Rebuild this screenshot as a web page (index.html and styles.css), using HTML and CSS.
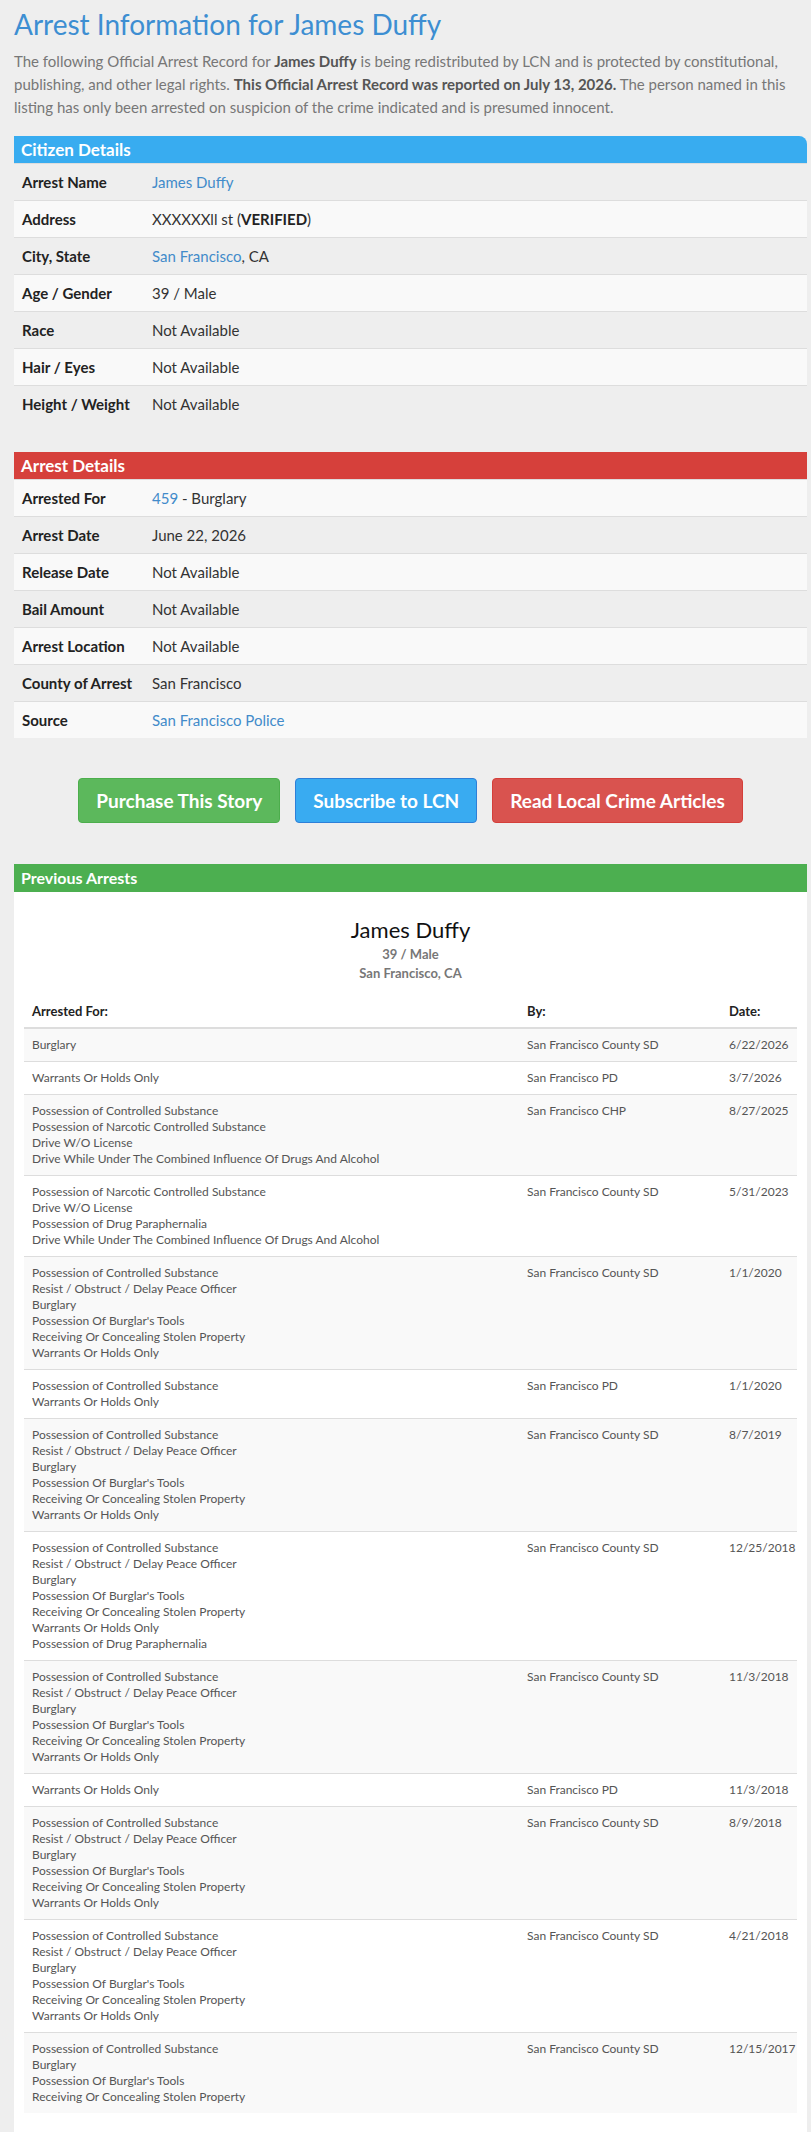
FILE: index.html
```html
<!DOCTYPE html>
<html lang="en">
<head>
    <meta charset="UTF-8">
    <meta name="viewport" content="width=device-width, initial-scale=1.0">
    <title>Arrest Information for James Duffy</title>
    <link rel="stylesheet" href="styles.css">
</head>
<body>

<div class="page">
    <h1 class="page-title">Arrest Information for James Duffy</h1>
    <p class="intro">The following Official Arrest Record for <b>James Duffy</b> is being redistributed by LCN and is protected by constitutional, publishing, and other legal rights. <b>This Official Arrest Record was reported on July 13, 2026.</b> The person named in this listing has only been arrested on suspicion of the crime indicated and is presumed innocent.</p>

    <div class="panel-head head-blue">Citizen Details</div>
    <table class="details">
        <tr><td class="label">Arrest Name</td><td><a href="#">James Duffy</a></td></tr>
        <tr><td class="label">Address</td><td>XXXXXXll st (<b>VERIFIED</b>)</td></tr>
        <tr><td class="label">City, State</td><td><a href="#">San Francisco</a>, CA</td></tr>
        <tr><td class="label">Age / Gender</td><td>39 / Male</td></tr>
        <tr><td class="label">Race</td><td>Not Available</td></tr>
        <tr><td class="label">Hair / Eyes</td><td>Not Available</td></tr>
        <tr><td class="label">Height / Weight</td><td>Not Available</td></tr>
    </table>

    <div class="panel-head head-red">Arrest Details</div>
    <table class="details details-arrest">
        <tr><td class="label">Arrested For</td><td><a href="#">459</a> - Burglary</td></tr>
        <tr><td class="label">Arrest Date</td><td>June 22, 2026</td></tr>
        <tr><td class="label">Release Date</td><td>Not Available</td></tr>
        <tr><td class="label">Bail Amount</td><td>Not Available</td></tr>
        <tr><td class="label">Arrest Location</td><td>Not Available</td></tr>
        <tr><td class="label">County of Arrest</td><td>San Francisco</td></tr>
        <tr><td class="label">Source</td><td><a href="#">San Francisco Police</a></td></tr>
    </table>

    <div class="actions">
        <a href="#" class="btn btn-green">Purchase This Story</a>
        <a href="#" class="btn btn-blue">Subscribe to LCN</a>
        <a href="#" class="btn btn-red">Read Local Crime Articles</a>
    </div>

    <div class="panel-head head-green">Previous Arrests</div>
    <div class="prev-panel">
        <h2 class="prev-name">James Duffy</h2>
        <div class="prev-meta">39 / Male</div>
        <div class="prev-meta">San Francisco, CA</div>

        <table class="history">
            <thead>
                <tr><th class="col-charge">Arrested For:</th><th class="col-by">By:</th><th class="col-date">Date:</th></tr>
            </thead>
            <tbody>
                <tr>
                    <td>Burglary</td>
                    <td>San Francisco County SD</td>
                    <td>6/22/2026</td>
                </tr>
                <tr>
                    <td>Warrants Or Holds Only</td>
                    <td>San Francisco PD</td>
                    <td>3/7/2026</td>
                </tr>
                <tr>
                    <td>Possession of Controlled Substance<br>Possession of Narcotic Controlled Substance<br>Drive W/O License<br>Drive While Under The Combined Influence Of Drugs And Alcohol</td>
                    <td>San Francisco CHP</td>
                    <td>8/27/2025</td>
                </tr>
                <tr>
                    <td>Possession of Narcotic Controlled Substance<br>Drive W/O License<br>Possession of Drug Paraphernalia<br>Drive While Under The Combined Influence Of Drugs And Alcohol</td>
                    <td>San Francisco County SD</td>
                    <td>5/31/2023</td>
                </tr>
                <tr>
                    <td>Possession of Controlled Substance<br>Resist / Obstruct / Delay Peace Officer<br>Burglary<br>Possession Of Burglar's Tools<br>Receiving Or Concealing Stolen Property<br>Warrants Or Holds Only</td>
                    <td>San Francisco County SD</td>
                    <td>1/1/2020</td>
                </tr>
                <tr>
                    <td>Possession of Controlled Substance<br>Warrants Or Holds Only</td>
                    <td>San Francisco PD</td>
                    <td>1/1/2020</td>
                </tr>
                <tr>
                    <td>Possession of Controlled Substance<br>Resist / Obstruct / Delay Peace Officer<br>Burglary<br>Possession Of Burglar's Tools<br>Receiving Or Concealing Stolen Property<br>Warrants Or Holds Only</td>
                    <td>San Francisco County SD</td>
                    <td>8/7/2019</td>
                </tr>
                <tr>
                    <td>Possession of Controlled Substance<br>Resist / Obstruct / Delay Peace Officer<br>Burglary<br>Possession Of Burglar's Tools<br>Receiving Or Concealing Stolen Property<br>Warrants Or Holds Only<br>Possession of Drug Paraphernalia</td>
                    <td>San Francisco County SD</td>
                    <td>12/25/2018</td>
                </tr>
                <tr>
                    <td>Possession of Controlled Substance<br>Resist / Obstruct / Delay Peace Officer<br>Burglary<br>Possession Of Burglar's Tools<br>Receiving Or Concealing Stolen Property<br>Warrants Or Holds Only</td>
                    <td>San Francisco County SD</td>
                    <td>11/3/2018</td>
                </tr>
                <tr>
                    <td>Warrants Or Holds Only</td>
                    <td>San Francisco PD</td>
                    <td>11/3/2018</td>
                </tr>
                <tr>
                    <td>Possession of Controlled Substance<br>Resist / Obstruct / Delay Peace Officer<br>Burglary<br>Possession Of Burglar's Tools<br>Receiving Or Concealing Stolen Property<br>Warrants Or Holds Only</td>
                    <td>San Francisco County SD</td>
                    <td>8/9/2018</td>
                </tr>
                <tr>
                    <td>Possession of Controlled Substance<br>Resist / Obstruct / Delay Peace Officer<br>Burglary<br>Possession Of Burglar's Tools<br>Receiving Or Concealing Stolen Property<br>Warrants Or Holds Only</td>
                    <td>San Francisco County SD</td>
                    <td>4/21/2018</td>
                </tr>
                <tr>
                    <td>Possession of Controlled Substance<br>Burglary<br>Possession Of Burglar's Tools<br>Receiving Or Concealing Stolen Property</td>
                    <td>San Francisco County SD</td>
                    <td>12/15/2017</td>
                </tr>
            </tbody>
        </table>
    </div>
</div>

</body>
</html>
```

FILE: styles.css
```css
body {
    margin: 0;
    background-color: #eeeeee;
    font-family: "Lato", "Open Sans", sans-serif;
    color: #333;
}

a {
    color: #428bca;
    text-decoration: none;
}

.page {
    padding: 0 4px 0 14px;
}

.page-title {
    margin: 6px 0 0;
    font-size: 28px;
    line-height: 36px;
    font-weight: 400;
    color: #3d8ed2;
}

.intro {
    margin: 8px 0 17px;
    font-size: 15px;
    line-height: 23px;
    font-weight: 400;
    color: #777;
}

.intro b {
    font-weight: 700;
    color: #555;
}

/* section header bars */
.panel-head {
    height: 27px;
    line-height: 27px;
    padding: 0 7px;
    font-size: 17px;
    font-weight: 700;
    color: white;
}

.head-blue {
    background-color: #38acf0;
    border-top-right-radius: 8px;
}

.head-red {
    background-color: #d6403b;
}

.head-green {
    height: 28px;
    line-height: 28px;
    font-size: 16px;
    background-color: #4caf50;
}

/* citizen / arrest details */
.details {
    width: 100%;
    border-collapse: collapse;
    margin-bottom: 30px;
}

.details td {
    padding: 8px;
    line-height: 20px;
    font-size: 15px;
    font-weight: 400;
    color: #333;
    border-top: 1px solid #dddddd;
}

.details td.label {
    width: 114px;
    font-weight: 700;
    color: #222;
}

.details td b {
    font-weight: 700;
    color: #222;
}

.details tr:nth-child(even) {
    background-color: #f9f9f9;
}

.details-arrest tr:nth-child(even) {
    background-color: transparent;
}

.details-arrest tr:nth-child(odd) {
    background-color: #f9f9f9;
}

/* buttons */
.actions {
    display: flex;
    justify-content: center;
    gap: 15px;
    margin: 40px 0 41px;
}

.btn {
    display: inline-block;
    padding: 10px 17px;
    line-height: 23px;
    font-size: 19px;
    font-weight: 700;
    color: white;
    border: 1px solid transparent;
    border-radius: 4px;
}

.btn-green {
    background-color: #5cb85c;
    border-color: #4cae4c;
}

.btn-blue {
    background-color: #39abf1;
    border-color: #2d7fd8;
}

.btn-red {
    background-color: #d9534f;
    border-color: #d43f3a;
}

/* previous arrests */
.prev-panel {
    background-color: white;
    padding: 10px 10px 20px;
    text-align: center;
}

.prev-name {
    margin: 15px 0 2px;
    font-size: 22px;
    line-height: 26px;
    font-weight: 400;
    color: #111;
}

.prev-meta {
    font-size: 13px;
    line-height: 19px;
    font-weight: 700;
    color: #777;
}

.history {
    width: 100%;
    margin-top: 12px;
    border-collapse: collapse;
    table-layout: fixed;
    text-align: left;
}

.history th {
    padding: 8px;
    line-height: 16px;
    font-size: 13px;
    font-weight: 700;
    color: #222;
    border-bottom: 2px solid #dddddd;
}

.history td {
    padding: 8px;
    line-height: 16px;
    font-size: 12px;
    font-weight: 400;
    color: #555;
    vertical-align: top;
    border-top: 1px solid #dddddd;
}

.history tbody tr:nth-child(odd) {
    background-color: #f9f9f9;
}

.col-by {
    width: 186px;
}

.col-date {
    width: 60px;
}
```
